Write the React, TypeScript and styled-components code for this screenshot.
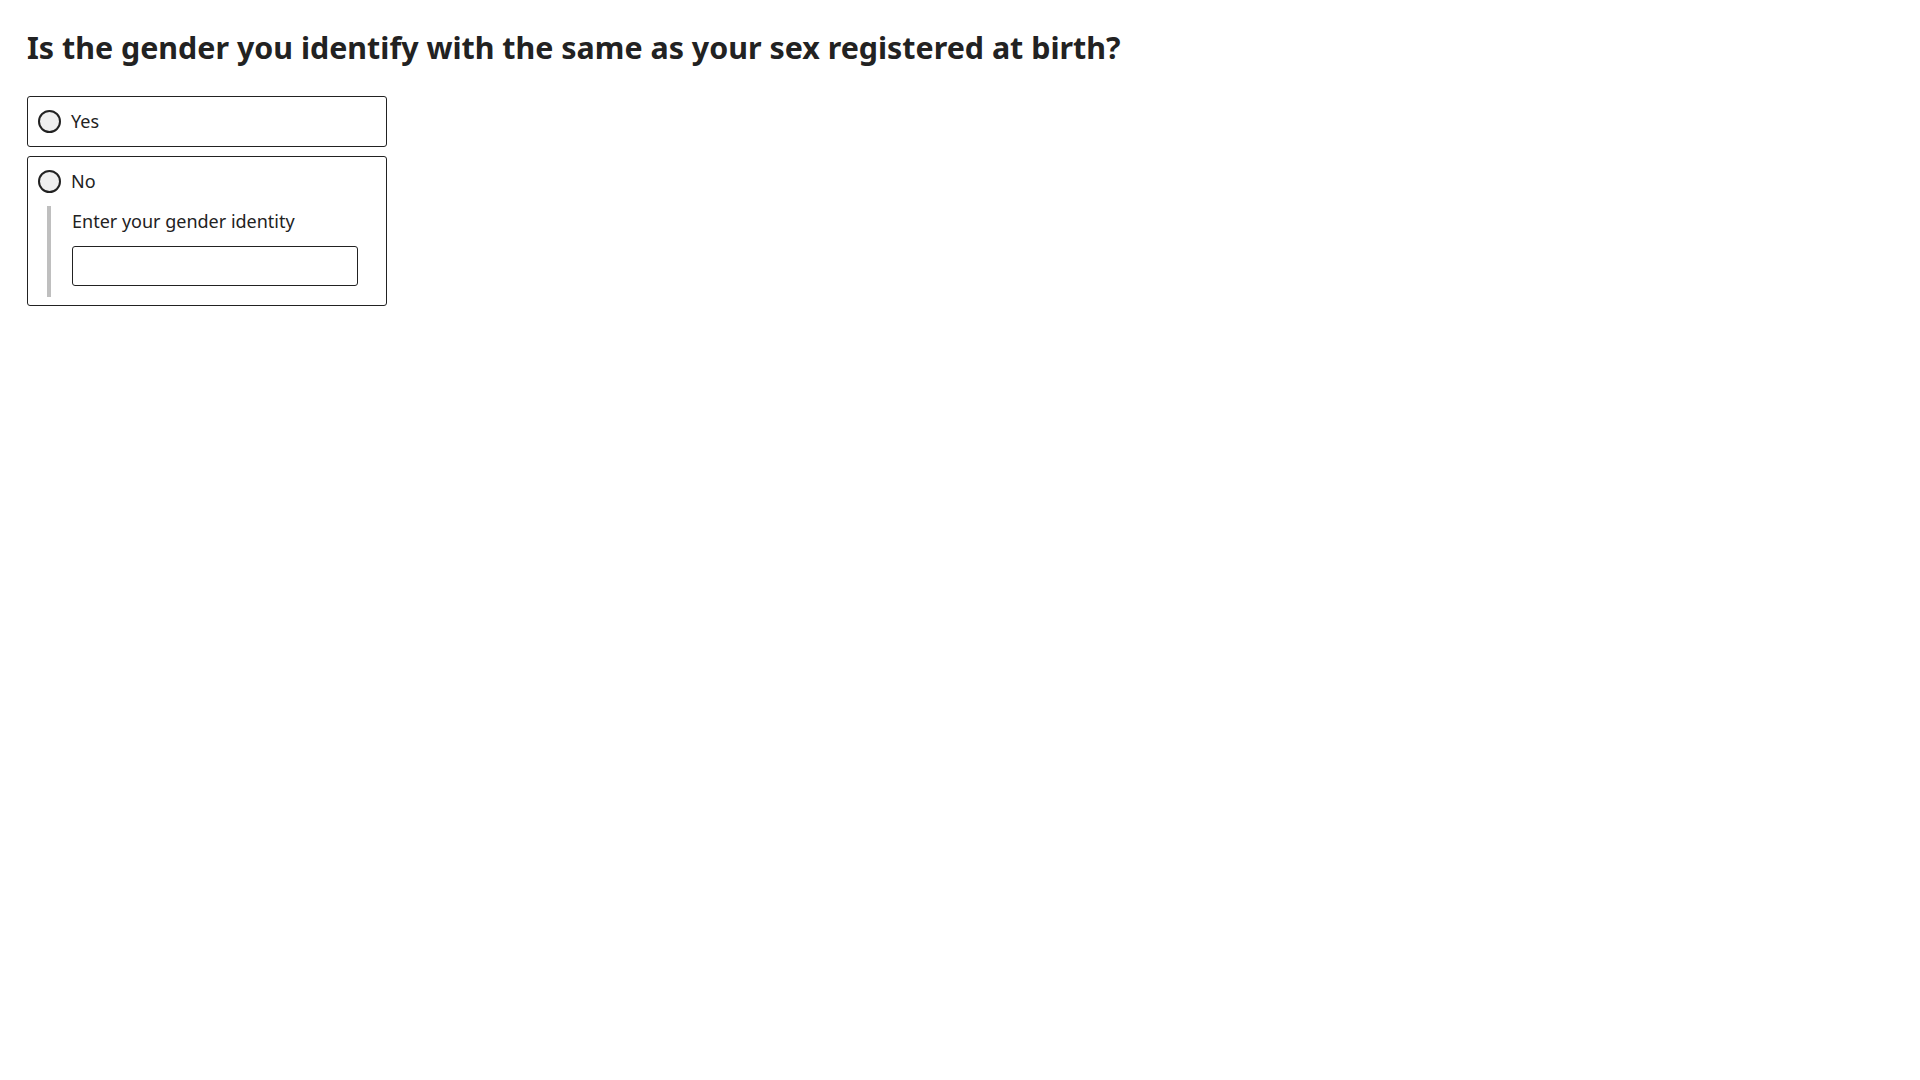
import styled, { createGlobalStyle } from "styled-components";

const GlobalStyle = createGlobalStyle`
  body {
    margin: 0;
    background: #ffffff;
    font-family: "Noto Sans", "Open Sans", sans-serif;
    color: #222222;
  }
`;

export default function App() {
    return (
        <Page>
            <GlobalStyle/>
            <Question>Is the gender you identify with the same as your sex registered at birth?</Question>
            <Options>
                <Option>
                    <Row>
                        <Radio type="radio" name="gender-same" id="gender-yes"/>
                        <RowLabel htmlFor="gender-yes">Yes</RowLabel>
                    </Row>
                </Option>
                <Option>
                    <Row>
                        <Radio type="radio" name="gender-same" id="gender-no"/>
                        <RowLabel htmlFor="gender-no">No</RowLabel>
                    </Row>
                    <Conditional>
                        <FieldLabel htmlFor="gender-identity">Enter your gender identity</FieldLabel>
                        <TextInput id="gender-identity" type="text"/>
                    </Conditional>
                </Option>
            </Options>
        </Page>
    )
}

const Page = styled.main`
  padding: 0 27px;
`

const Question = styled.h1`
  margin: 0;
  padding-top: 29px;
  font-size: 30.4px;
  line-height: 37px;
  font-weight: 700;
  color: #222222;
`

const Options = styled.div`
  margin-top: 30px;
  width: 360px;
  display: flex;
  flex-direction: column;
  gap: 9px;
`

const Option = styled.div`
  border: 1px solid #222222;
  border-radius: 3px;
  padding: 0 10px;
`

const Row = styled.div`
  display: flex;
  align-items: center;
  gap: 10px;
  height: 49px;
`

const Radio = styled.input`
  appearance: none;
  margin: 0;
  width: 23px;
  height: 23px;
  border: 2px solid #222222;
  border-radius: 50%;
  background: #efefef;
  box-sizing: border-box;
`

const RowLabel = styled.label`
  font-size: 18px;
  line-height: 27px;
`

const Conditional = styled.div`
  margin: 0 0 8px 9px;
  padding: 2px 0 11px 21px;
  border-left: 4px solid #bfbfbf;
`

const FieldLabel = styled.label`
  display: block;
  font-size: 18px;
  line-height: 27px;
  margin-bottom: 11px;
`

const TextInput = styled.input`
  display: block;
  box-sizing: border-box;
  width: 286px;
  height: 40px;
  margin: 0;
  border: 1px solid #222222;
  border-radius: 3px;
  background: #ffffff;
`
